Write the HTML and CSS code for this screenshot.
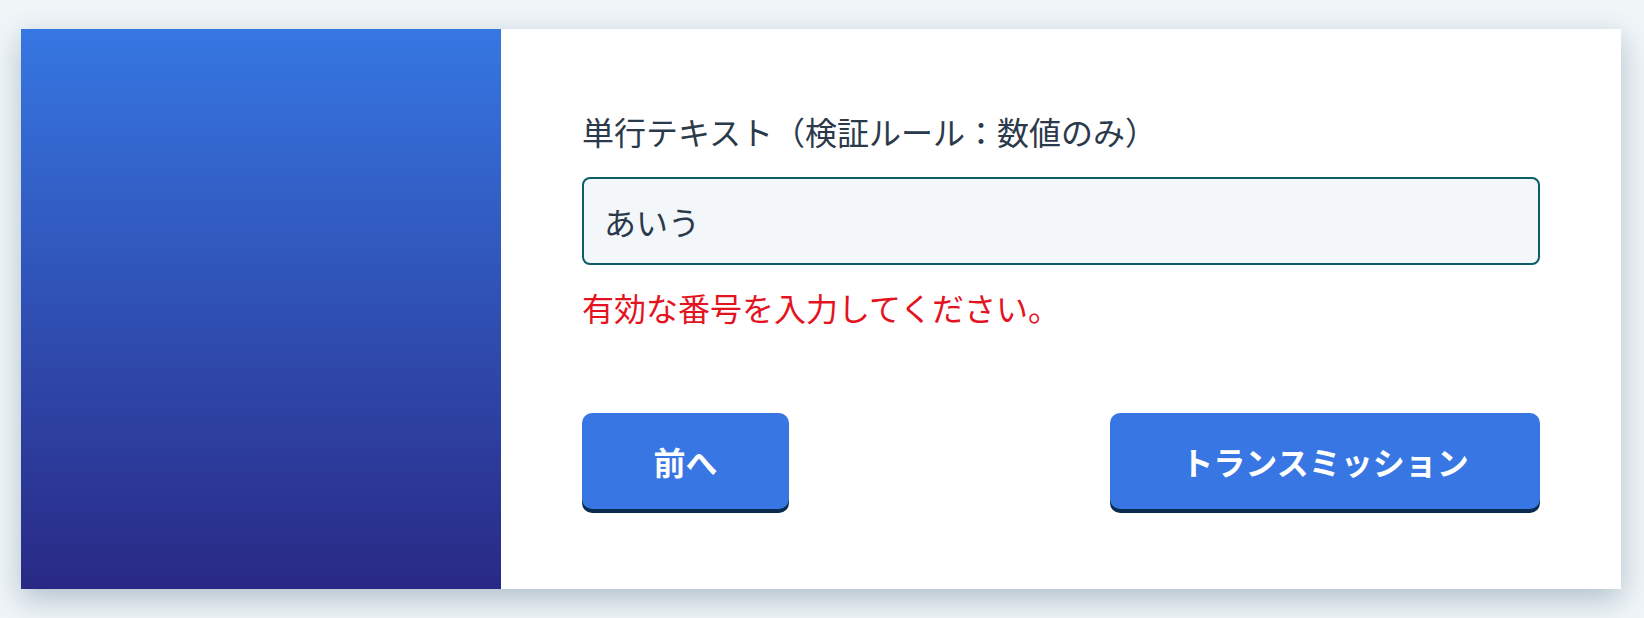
FILE: index.html
```html
<!DOCTYPE html>
<html lang="ja">
<head>
  <meta charset="UTF-8" />
  <title>フォーム</title>
  <meta name="viewport" content="width=device-width, initial-scale=1.0" />
  <link rel="stylesheet" href="styles.css">
</head>
<body>

  <div class="card">
    <div class="card-side"></div>

    <div class="card-body">
      <label class="field-label" for="numField">単行テキスト（検証ルール：数値のみ）</label>
      <input type="text" id="numField" class="field-input" value="あいう" />
      <p class="field-error">有効な番号を入力してください。</p>

      <div class="actions">
        <button class="btn btn-prev">前へ</button>
        <button class="btn btn-submit">トランスミッション</button>
      </div>
    </div>
  </div>

</body>
</html>
```

FILE: styles.css
```css
:root {
  --main-color: #3877e3;
  --btn-edge: #0a2b4e;
  --text-color: #2b3a4b;
  --error-color: #e3141f;
  --bg-color: #f0f5f8;
  --font: "Noto Sans CJK JP", "Noto Sans", sans-serif;
}
html, body {
  height: 100%;
}
body {
  margin: 0;
  padding: 0 21px;
  font-family: var(--font);
  background-color: var(--bg-color);
  display: flex;
  align-items: center;
}
.card {
  width: 1600px;
  height: 560px;
  display: flex;
  background: #fff;
  box-shadow: 0 10px 28px rgba(40, 80, 110, 0.32);
}
.card-side {
  width: 480px;
  flex-shrink: 0;
  background: linear-gradient(to bottom, #3677e2, #292985);
}
.card-body {
  flex: 1;
  padding: 80px 81px 0 81px;
  display: flex;
  flex-direction: column;
}
.field-label {
  font-size: 32px;
  line-height: 45px;
  color: var(--text-color);
  margin-bottom: 23px;
}
.field-input {
  box-sizing: border-box;
  height: 88px;
  width: 100%;
  padding: 0 20px;
  font-family: var(--font);
  font-size: 32px;
  color: var(--text-color);
  background: #f3f7fa;
  border: 2px solid #0b5d66;
  border-radius: 8px;
  outline: none;
}
.field-error {
  margin: 20px 0 0;
  font-size: 32px;
  line-height: 45px;
  color: var(--error-color);
}
.actions {
  margin-top: 83px;
  display: flex;
  justify-content: space-between;
}
.btn {
  height: 96px;
  padding: 0;
  font-family: var(--font);
  font-size: 32px;
  font-weight: bold;
  color: #fff;
  background-color: var(--main-color);
  border: none;
  border-radius: 10px;
  box-shadow: 0 4px 0 var(--btn-edge);
  cursor: pointer;
}
.btn-prev {
  width: 207px;
}
.btn-submit {
  width: 430px;
}
```
